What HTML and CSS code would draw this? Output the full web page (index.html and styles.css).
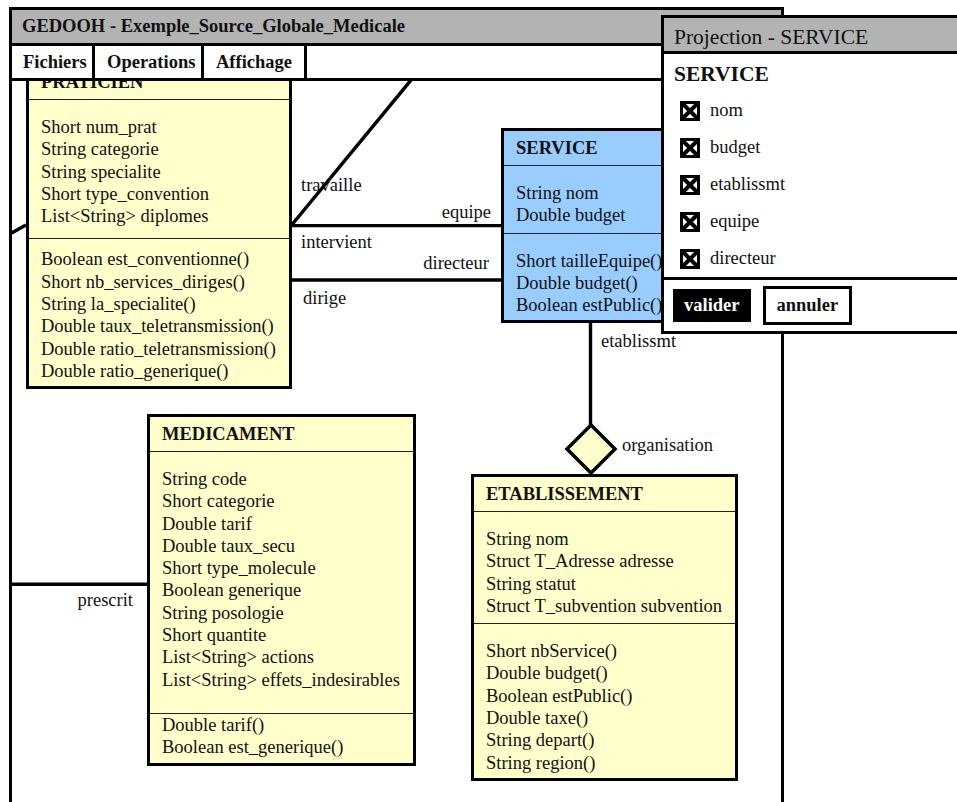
FILE: index.html
```html
<!DOCTYPE html>
<html lang="fr">
<head>
    <meta charset="UTF-8">
    <title>GEDOOH - Exemple_Source_Globale_Medicale</title>
    <link rel="stylesheet" href="styles.css">
</head>
<body>
    <div class="window main-window">
        <div class="titlebar">GEDOOH - Exemple_Source_Globale_Medicale</div>
        <div class="menubar">
            <div class="menu-item menu-fichiers">Fichiers</div>
            <div class="menu-item menu-operations">Operations</div>
            <div class="menu-item menu-affichage">Affichage</div>
        </div>
        <div class="canvas">
            <div class="link-label lbl-travaille">travaille</div>
            <div class="link-label lbl-equipe">equipe</div>
            <div class="link-label lbl-intervient">intervient</div>
            <div class="link-label lbl-directeur">directeur</div>
            <div class="link-label lbl-dirige">dirige</div>
            <div class="link-label lbl-etablissmt">etablissmt</div>
            <div class="link-label lbl-organisation">organisation</div>
            <div class="link-label lbl-prescrit">prescrit</div>

            <svg class="links" xmlns="http://www.w3.org/2000/svg">
                <path d="M279.7 144 L406.5 -10" stroke="#000" stroke-width="3.5" fill="none"/>
                <path d="M-5 154.5 L14 144" stroke="#000" stroke-width="3.5" fill="none"/>
                <path d="M280 144.7 H489" stroke="#000" stroke-width="3.2" fill="none"/>
                <path d="M280 199 H489" stroke="#000" stroke-width="3.4" fill="none"/>
                <path d="M578.5 242 V344" stroke="#000" stroke-width="3.4" fill="none"/>
                <path d="M-3 503.3 H135" stroke="#000" stroke-width="3.4" fill="none"/>
                <polygon points="579,344 603,368 579,392 555,368" fill="#ffffcc" stroke="#000" stroke-width="3.5"/>
            </svg>

            <div class="uml-class praticien">
                <div class="uml-name">PRATICIEN</div>
                <div class="uml-attrs">
                    <div>Short num_prat</div>
                    <div>String categorie</div>
                    <div>String specialite</div>
                    <div>Short type_convention</div>
                    <div>List&lt;String&gt; diplomes</div>
                </div>
                <div class="uml-methods">
                    <div>Boolean est_conventionne()</div>
                    <div>Short nb_services_diriges()</div>
                    <div>String la_specialite()</div>
                    <div>Double taux_teletransmission()</div>
                    <div>Double ratio_teletransmission()</div>
                    <div>Double ratio_generique()</div>
                </div>
            </div>

            <div class="uml-class service">
                <div class="uml-name">SERVICE</div>
                <div class="uml-attrs">
                    <div>String nom</div>
                    <div>Double budget</div>
                </div>
                <div class="uml-methods">
                    <div>Short tailleEquipe()</div>
                    <div>Double budget()</div>
                    <div>Boolean estPublic()</div>
                </div>
            </div>

            <div class="uml-class medicament">
                <div class="uml-name">MEDICAMENT</div>
                <div class="uml-attrs">
                    <div>String code</div>
                    <div>Short categorie</div>
                    <div>Double tarif</div>
                    <div>Double taux_secu</div>
                    <div>Short type_molecule</div>
                    <div>Boolean generique</div>
                    <div>String posologie</div>
                    <div>Short quantite</div>
                    <div>List&lt;String&gt; actions</div>
                    <div>List&lt;String&gt; effets_indesirables</div>
                </div>
                <div class="uml-methods">
                    <div>Double tarif()</div>
                    <div>Boolean est_generique()</div>
                </div>
            </div>

            <div class="uml-class etablissement">
                <div class="uml-name">ETABLISSEMENT</div>
                <div class="uml-attrs">
                    <div>String nom</div>
                    <div>Struct T_Adresse adresse</div>
                    <div>String statut</div>
                    <div>Struct T_subvention subvention</div>
                </div>
                <div class="uml-methods">
                    <div>Short nbService()</div>
                    <div>Double budget()</div>
                    <div>Boolean estPublic()</div>
                    <div>Double taxe()</div>
                    <div>String depart()</div>
                    <div>String region()</div>
                </div>
            </div>
        </div>
    </div>

    <div class="window projection">
        <div class="proj-title">Projection - SERVICE</div>
        <div class="proj-body">
            <div class="proj-heading">SERVICE</div>
            <div class="proj-row">
                <svg class="check" viewBox="0 0 20 20"><rect x="1.5" y="1.5" width="17" height="17" fill="#fff" stroke="#000" stroke-width="3"/><path d="M3 3 L17 17 M17 3 L3 17" stroke="#000" stroke-width="4"/></svg>
                <span>nom</span>
            </div>
            <div class="proj-row">
                <svg class="check" viewBox="0 0 20 20"><rect x="1.5" y="1.5" width="17" height="17" fill="#fff" stroke="#000" stroke-width="3"/><path d="M3 3 L17 17 M17 3 L3 17" stroke="#000" stroke-width="4"/></svg>
                <span>budget</span>
            </div>
            <div class="proj-row">
                <svg class="check" viewBox="0 0 20 20"><rect x="1.5" y="1.5" width="17" height="17" fill="#fff" stroke="#000" stroke-width="3"/><path d="M3 3 L17 17 M17 3 L3 17" stroke="#000" stroke-width="4"/></svg>
                <span>etablissmt</span>
            </div>
            <div class="proj-row">
                <svg class="check" viewBox="0 0 20 20"><rect x="1.5" y="1.5" width="17" height="17" fill="#fff" stroke="#000" stroke-width="3"/><path d="M3 3 L17 17 M17 3 L3 17" stroke="#000" stroke-width="4"/></svg>
                <span>equipe</span>
            </div>
            <div class="proj-row">
                <svg class="check" viewBox="0 0 20 20"><rect x="1.5" y="1.5" width="17" height="17" fill="#fff" stroke="#000" stroke-width="3"/><path d="M3 3 L17 17 M17 3 L3 17" stroke="#000" stroke-width="4"/></svg>
                <span>directeur</span>
            </div>
        </div>
        <div class="proj-actions">
            <button class="btn btn-ok">valider</button>
            <button class="btn btn-cancel">annuler</button>
        </div>
    </div>
</body>
</html>
```

FILE: styles.css
```css
:root {
    --ink: #111;
    --bar-gray: #b3b3b3;
    --class-yellow: #ffffcc;
    --class-blue: #99ccff;
}

body {
    margin: 0;
    background: #fff;
    color: var(--ink);
    font-family: "Liberation Serif", "Times New Roman", serif;
    font-size: 18.5px;
    overflow: hidden;
}

.window {
    position: absolute;
    box-sizing: border-box;
    border: 3px solid #000;
    background: #fff;
}

/* main editor window */
.main-window {
    left: 9px;
    top: 7px;
    width: 775px;
    height: 830px;
    display: flex;
    flex-direction: column;
}

.titlebar {
    flex: none;
    height: 33px;
    line-height: 33px;
    padding-left: 10px;
    background: var(--bar-gray);
    border-bottom: 3px solid #000;
    font-weight: bold;
}

.menubar {
    flex: none;
    display: flex;
    height: 32px;
    border-bottom: 3px solid #000;
}

.menu-item {
    box-sizing: border-box;
    line-height: 32px;
    padding-left: 12px;
    font-weight: bold;
    border-right: 3px solid #000;
}
.menu-fichiers { width: 83px; padding-left: 11px; }
.menu-operations { width: 109px; }
.menu-affichage { width: 103px; }

.canvas {
    position: relative;
    flex: 1;
    overflow: hidden;
}

.links {
    position: absolute;
    left: 0;
    top: 0;
    width: 100%;
    height: 100%;
    overflow: visible;
}

.link-label {
    position: absolute;
    line-height: 22px;
    white-space: nowrap;
}
.lbl-travaille { left: 289px; top: 93px; }
.lbl-equipe { right: 290px; top: 120px; }
.lbl-intervient { left: 289px; top: 150px; }
.lbl-directeur { right: 292px; top: 171px; }
.lbl-dirige { left: 291px; top: 206px; }
.lbl-etablissmt { left: 589px; top: 249px; }
.lbl-organisation { left: 610px; top: 353px; }
.lbl-prescrit { right: 648px; top: 508px; }

/* uml class boxes */
.uml-class {
    position: absolute;
    box-sizing: border-box;
    border: 3px solid #000;
    background: var(--class-yellow);
    line-height: 22.3px;
    white-space: nowrap;
    overflow: hidden;
}

.uml-name {
    height: 34px;
    line-height: 34px;
    padding: 0 12px;
    font-weight: bold;
    border-bottom: 1px solid #222;
}

.uml-attrs {
    padding: 16px 12px 6px;
    border-bottom: 1px solid #222;
}

.uml-methods {
    padding: 16px 12px 4px;
}

.praticien { left: 14px; top: -19px; width: 266px; }
.praticien .uml-attrs { padding-bottom: 11px; }
.praticien .uml-methods { padding-top: 9px; }

.service { left: 489px; top: 47px; width: 190px; background: var(--class-blue); }

.medicament { left: 135px; top: 333px; width: 269px; }
.medicament .uml-attrs { padding-bottom: 22px; }
.medicament .uml-methods { padding-top: 0; }

.etablissement { left: 459px; top: 393px; width: 267px; }

/* projection dialog */
.projection {
    left: 661px;
    top: 15px;
    width: 330px;
    z-index: 2;
}

.proj-title {
    height: 27px;
    padding: 6px 0 0 10px;
    line-height: 27px;
    font-size: 21.5px;
    background: var(--bar-gray);
    border-bottom: 3px solid #000;
}

.proj-heading {
    height: 38px;
    line-height: 40px;
    padding-left: 10px;
    font-size: 21.5px;
    font-weight: bold;
}

.proj-row {
    display: flex;
    align-items: center;
    gap: 10px;
    height: 37px;
    padding-left: 16px;
}

.check {
    width: 20px;
    height: 20px;
    flex: none;
}

.proj-actions {
    display: flex;
    align-items: center;
    gap: 12px;
    height: 51px;
    padding-left: 9px;
    border-top: 3px solid #000;
}

.btn {
    font-family: inherit;
    font-size: 18.5px;
    font-weight: bold;
    padding: 0 11px;
    cursor: pointer;
}

.btn-ok {
    height: 33px;
    background: #000;
    color: #fff;
    border: none;
}

.btn-cancel {
    height: 39px;
    background: #fff;
    color: var(--ink);
    border: 3px solid #000;
}
```
